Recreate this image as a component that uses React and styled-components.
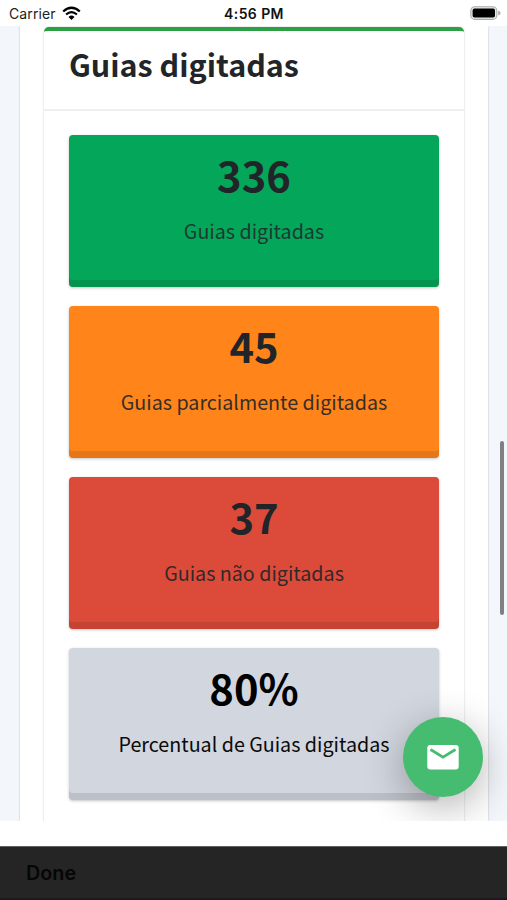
import React from "react";
import styled, { createGlobalStyle } from "styled-components";

const Global = createGlobalStyle`
  * { box-sizing: border-box; }
  body { margin: 0; background: #fff; overflow: hidden; }
`;
const sans = `"Noto Sans CJK SC", "Noto Sans", sans-serif`;

const Screen = styled.div`
  position: relative;
  width: 507px;
  height: 900px;
  display: flex;
  flex-direction: column;
  overflow: hidden;
  background: #fff;
  font-family: ${sans};
`;
const StatusBar = styled.header`
  height: 26px;
  flex: none;
  display: grid;
  grid-template-columns: 1fr auto 1fr;
  align-items: center;
  padding: 1px 6px 0 9px;
  font: 14px/20px Inter, sans-serif;
  color: #222;
`;
const Carrier = styled.div`
  display: flex;
  align-items: center;
  gap: 6px;
  letter-spacing: 0.1px;
`;
const Time = styled.div`
  font-weight: 600;
  letter-spacing: 0.4px;
  margin-left: -2px;
  color: #111;
`;
const Battery = styled.svg`
  justify-self: end;
  margin-top: -1px;
`;
const Viewport = styled.main`
  position: relative;
  height: 795px;
  flex: none;
  padding: 0 19px 0 20px;
  background: #f3f6fa;
  overflow: hidden;
`;
const Outer = styled.div`
  height: 100%;
  padding: 0.6px 24px 0;
  background: #fff;
  box-shadow: 0 0 2px rgba(0, 0, 0, 0.24);
`;
const Panel = styled.section`
  height: 820px;
  border-top: 4px solid #2a9f43;
  border-radius: 5px;
  background: #fff;
  box-shadow: 0 0 2px rgba(0, 0, 0, 0.24);
`;
const Heading = styled.h3`
  height: 80.4px;
  margin: 0;
  padding: 7.4px 25px 0;
  border-bottom: 2px solid #efeff1;
  font-size: 30.5px;
  line-height: 52px;
  font-weight: 700;
  color: #212529;
  white-space: nowrap;
`;
const Cards = styled.div`
  display: flex;
  flex-direction: column;
  gap: 19px;
  padding: 24px 25px 0;
`;
const Card = styled.article`
  height: 152px;
  display: flex;
  flex-direction: column;
  align-items: center;
  padding-top: 11px;
  border-radius: 4px;
  background: ${(p) => p.$bg};
  color: ${(p) => p.$ink};
  box-shadow: inset 0 -7px rgba(0, 0, 0, 0.1), 0 1px 3px rgba(0, 0, 0, 0.23);
`;
const Value = styled.strong`
  font-size: 41.7px;
  line-height: 56px;
  font-weight: 700;
`;
const Label = styled.span`
  margin-top: 14px;
  font-size: 19.7px;
  line-height: 30px;
  white-space: nowrap;
  opacity: ${(p) => p.$fade};
`;
const Scrollbar = styled.div`
  position: absolute;
  right: 3px;
  top: 415px;
  width: 4px;
  height: 174px;
  border-radius: 2px;
  background: #7e8083;
`;
const MailButton = styled.button`
  position: absolute;
  left: 403px;
  top: 690.5px;
  width: 80px;
  height: 80px;
  padding: 0;
  display: grid;
  place-items: center;
  border: 0;
  border-radius: 50%;
  background: #46bc70;
  box-shadow: 0 10px 40px rgba(0, 0, 0, 0.31);
`;
const Toolbar = styled.footer`
  height: 54px;
  flex: none;
  margin-top: 25px;
  padding: 0 26px;
  display: flex;
  align-items: center;
  border-top: 1px solid #606060;
  border-bottom: 2px solid #1d181c;
  background: #252525;
`;
const Done = styled.span`
  font: 600 19.8px/28px Inter, sans-serif;
  color: #060606;
`;

const cards = [
  { value: "336", label: "Guias digitadas", bg: "#04a65a", ink: "#212529", fade: 0.83 },
  { value: "45", label: "Guias parcialmente digitadas", bg: "#ff851b", ink: "#212529", fade: 0.9 },
  { value: "37", label: "Guias não digitadas", bg: "#dc4b39", ink: "#212529", fade: 0.9 },
  { value: "80%", label: "Percentual de Guias digitadas", bg: "#d2d6de", ink: "#000", fade: 0.95 },
];

export default function App() {
  return (
    <Screen>
      <Global />
      <StatusBar>
        <Carrier>
          Carrier
          <svg width="19" height="15" viewBox="0 0 19 15" fill="none" stroke="#000" strokeWidth="2.3">
            <path d="M1.2 5.5Q9.5-2 17.8 5.5M4.1 8.5Q9.5 3.7 14.9 8.5" />
            <path d="M6.5 11Q9.5 8.2 12.5 11L9.5 14Z" fill="#000" stroke="none" />
          </svg>
        </Carrier>
        <Time>4:56 PM</Time>
        <Battery width="31" height="14" viewBox="0 0 31 14">
          <rect x="0.8" y="0.8" width="26" height="12.6" rx="4" fill="#e9e9e9" stroke="#aaa" strokeWidth="1.1" />
          <rect x="2.6" y="2.6" width="22.4" height="9" rx="1.8" fill="#000" />
          <path d="M28.2 4.7Q30.6 5.2 30.6 7T28.2 9.4Z" fill="#aaa" />
        </Battery>
      </StatusBar>
      <Viewport>
        <Outer>
          <Panel>
            <Heading>Guias digitadas</Heading>
            <Cards>
              {cards.map((c) => (
                <Card key={c.value} $bg={c.bg} $ink={c.ink}>
                  <Value>{c.value}</Value>
                  <Label $fade={c.fade}>{c.label}</Label>
                </Card>
              ))}
            </Cards>
          </Panel>
        </Outer>
        <Scrollbar />
        <MailButton aria-label="Mail">
          <svg width="32" height="26" viewBox="0 0 32 26">
            <rect x="0.3" y="1" width="31.4" height="24.5" rx="3" fill="#fff" />
            <path d="M3.5 5.5L16 13.2L28.5 5.5" fill="none" stroke="#46bc70" strokeWidth="2.7" />
          </svg>
        </MailButton>
      </Viewport>
      <Toolbar>
        <Done>Done</Done>
      </Toolbar>
    </Screen>
  );
}
